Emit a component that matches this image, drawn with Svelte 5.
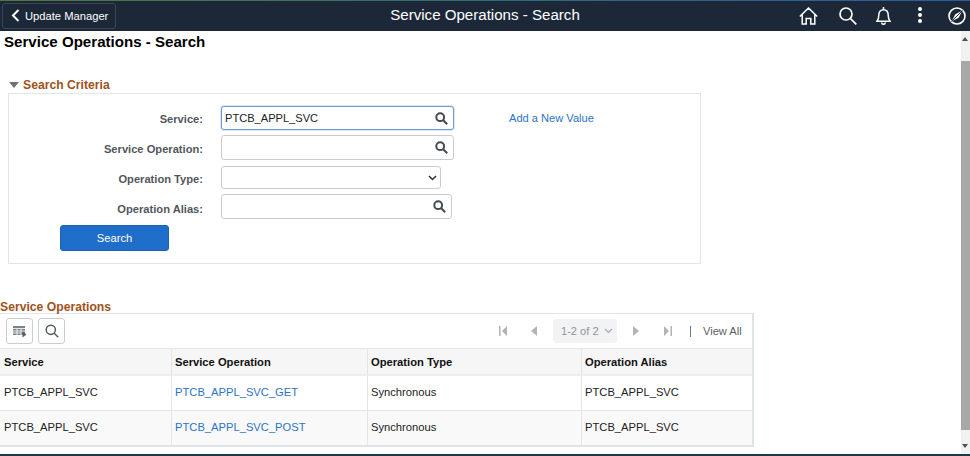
<script>
  const fields = [
    { label: 'Service:', value: 'PTCB_APPL_SVC', cls: 'f1 active', kind: 'lookup' },
    { label: 'Service Operation:', value: '', cls: 'f2', kind: 'lookup' },
    { label: 'Operation Type:', value: '', cls: 'f3', kind: 'select' },
    { label: 'Operation Alias:', value: '', cls: 'f4', kind: 'lookup' }
  ];
  const rows = [
    { op: 'PTCB_APPL_SVC_GET', alt: false },
    { op: 'PTCB_APPL_SVC_POST', alt: true }
  ];
</script>

<div class="page">
  <header class="bar">
    <button class="back">
      <svg width="9" height="13" viewBox="0 0 9 13"><path d="M7.500 1 2 6.500 7.500 12" fill="none" stroke="#fff" stroke-width="2"/></svg>
      <span>Update Manager</span>
    </button>
    <div class="title">Service Operations - Search</div>
    <div class="icons">
      <svg class="home" width="19" height="18" viewBox="0 0 19 18" fill="none" stroke="#fff" stroke-width="1.500"><path d="M.8 9.500 9.500 1l8.700 8.500M3.200 7.500V17H7.200v-5.500h4.600V17h4V7.500"/></svg>
      <svg class="mag" width="18" height="18" viewBox="0 0 18 18" fill="none" stroke="#fff" stroke-width="1.700"><circle cx="7" cy="7" r="6"/><path d="m11.300 11.300 6 6"/></svg>
      <svg class="bell" width="15" height="19" viewBox="0 0 15 19" fill="none" stroke="#fff" stroke-width="1.500"><path d="M1 15.300c1.300-1.400 1.800-3 1.800-6.300 0-3 1.700-5.300 4.700-5.300S12.200 6 12.200 9c0 3.300.5 4.900 1.800 6.300z"/><path d="M7.500 3.500V1M5.700 16.500c0 1.200.8 1.800 1.800 1.800s1.800-.6 1.800-1.800"/></svg>
      <svg class="dots" width="6" height="16" viewBox="0 0 6 16" fill="#fff"><circle cx="3" cy="2" r="2"/><circle cx="3" cy="8" r="2"/><circle cx="3" cy="14" r="2"/></svg>
      <svg class="nav" width="18" height="18" viewBox="0 0 18 18" fill="none" stroke="#fff" stroke-width="1.600"><circle cx="9" cy="9" r="8"/><path d="M14.200 3.800 10.700 10.700 3.800 14.200 7.300 7.300z" fill="#fff" stroke="none"/><path d="M14.500 3.500 3.500 14.500" stroke="#1c2838" stroke-width="1"/></svg>
    </div>
  </header>

  <div class="body">
    <main>
      <h1>Service Operations - Search</h1>
      <h2 class="crit"><i class="tri"></i>Search Criteria</h2>
      <section class="box">
        <div class="form">
          {#each fields as f}
            <div class="row {f.cls}">
              <label>{f.label}</label>
              <div class="field">
                <span>{f.value}</span>
                {#if f.kind === 'lookup'}
                  <svg width="13" height="13" viewBox="0 0 13 13" fill="none" stroke="#444c52" stroke-width="2"><circle cx="5.200" cy="5.200" r="3.900"/><path d="m8.200 8.200 4 4"/></svg>
                {:else}
                  <svg width="9" height="6" viewBox="0 0 9 6" fill="none" stroke="#333" stroke-width="1.500"><path d="m1 1 3.500 3.500L8 1"/></svg>
                {/if}
              </div>
            </div>
          {/each}
          <button class="search">Search</button>
        </div>
        <a class="add" href="#a">Add a New Value</a>
      </section>

      <h2 class="ops">Service Operations</h2>
      <section class="grid">
        <div class="tools">
          <button class="tool">
            <svg width="14" height="13" viewBox="0 0 14 13" fill="none"><path d="M0 1h12v9H0z" fill="#7b848b"/><path d="M0 3.500h12M4 3.500V10M8 3.500V10M0 6h12M0 8h8" stroke="#fff" stroke-width=".8"/><path d="M9.500 6.500 13.500 9.500 9.500 12.500z" fill="#555d63"/></svg>
          </button>
          <button class="tool">
            <svg width="14" height="14" viewBox="0 0 14 14" fill="none" stroke="#555d63" stroke-width="1.500"><circle cx="5.800" cy="5.800" r="4.600"/><path d="m9.200 9.200 4 4"/></svg>
          </button>
          <div class="pager">
            <svg width="8" height="10" viewBox="0 0 8 10"><path d="M0 0h1.500v10H0zM8 0v10L3 5z" fill="#aeb4b9"/></svg>
            <svg class="p2" width="6" height="10" viewBox="0 0 6 10"><path d="M6 0v10L0 5z" fill="#aeb4b9"/></svg>
            <div class="count"><span>1-2 of 2</span>
              <svg width="9" height="6" viewBox="0 0 9 6" fill="none" stroke="#a3a9ae" stroke-width="1.100"><path d="m1 1 3.500 3.500L8 1"/></svg>
            </div>
            <svg class="p3" width="6" height="10" viewBox="0 0 6 10"><path d="M0 0v10l6-5z" fill="#aeb4b9"/></svg>
            <svg class="p4" width="8" height="10" viewBox="0 0 8 10"><path d="M0 0v10l5-5zM6.500 0H8v10H6.500z" fill="#aeb4b9"/></svg>
            <i class="sep"></i>
            <span class="all">View All</span>
          </div>
        </div>
        <table>
          <thead>
            <tr><th class="c1">Service</th><th class="c2">Service Operation</th><th class="c3">Operation Type</th><th class="c4">Operation Alias</th></tr>
          </thead>
          <tbody>
            {#each rows as r}
              <tr class:alt={r.alt}>
                <td>PTCB_APPL_SVC</td>
                <td><a href="#a">{r.op}</a></td>
                <td>Synchronous</td>
                <td>PTCB_APPL_SVC</td>
              </tr>
            {/each}
          </tbody>
        </table>
      </section>
    </main>
    <aside class="scroll">
      <i class="up"></i>
      <div class="thumb"></div>
      <i class="down"></i>
    </aside>
  </div>
  <div class="foot"></div>
</div>

<style>
  :global(body) { margin: 0; background: #fff; }
  .page { width: 970px; height: 456px; display: flex; flex-direction: column; overflow: hidden; font-family: "Liberation Sans", Arial, sans-serif; color: #222; white-space: nowrap; }
  .bar { height: 31px; box-sizing: border-box; flex: none; background: #1c2838; display: flex; align-items: center; position: relative; color: #fff; }
  .bar::before { content: ""; position: absolute; left: 0; right: 0; top: 0; height: 1px; background: linear-gradient(90deg, #4f7a3c, #2f6a78 50%, #2a5f9e); }
  .back { margin: 0 0 0 2px; width: 114px; height: 26px; box-sizing: border-box; background: #1c2838; border: 1px solid #3a4655; border-radius: 3px; color: #fff; font: 11.200px "Liberation Sans", Arial, sans-serif; white-space: nowrap; display: flex; align-items: center; padding: 0 0 0 8px; gap: 5px; }
  .title { position: absolute; left: 0; width: 970px; text-align: center; font-size: 15.100px; top: 6px; }
  .icons { position: absolute; inset: 0; }
  .icons svg { position: absolute; }
  .home { left: 799px; top: 7px; }
  .mag { left: 839px; top: 7px; }
  .bell { left: 876px; top: 6px; }
  .dots { left: 917px; top: 7px; }
  .nav { left: 948px; top: 7px; }

  .body { flex: 1; display: flex; min-height: 0; }
  main { flex: 1; min-width: 0; }
  h1 { margin: 0; padding: 2px 0 0 4px; font-size: 15.100px; line-height: 18px; font-weight: bold; color: #000; }
  h2 { margin: 0; font-size: 12.200px; line-height: 14px; font-weight: bold; color: #a0521c; }
  .crit { margin-top: 27px; padding-left: 9px; display: flex; align-items: center; gap: 4px; }
  .tri { width: 0; height: 0; border-left: 5px solid transparent; border-right: 5px solid transparent; border-top: 6px solid #6d7378; }
  .box { margin: 1px 0 0 8px; width: 693px; height: 171px; box-sizing: border-box; border: 1px solid #e3e5e7; position: relative; }
  .form { display: flex; flex-direction: column; padding-top: 12px; }
  .row { display: flex; align-items: center; }
  .row label { width: 194px; padding-top: 2px; text-align: right; font-size: 11.150px; font-weight: bold; color: #51575c; }
  .f4 label { padding-top: 5px; }
  .field { margin-left: 18px; box-sizing: border-box; height: 25px; border: 1px solid #c9cdd1; border-radius: 3px; display: flex; align-items: center; justify-content: space-between; padding: 0 5px 0 3px; font-size: 11.100px; color: #222; background: #fff; }
  .f1 .field { width: 233px; height: 24px; border-color: #6f9ccf; box-shadow: 0 0 0 1px #dbe7f4; }
  .f2 { margin-top: 5px; }
  .f2 .field { width: 233px; }
  .f3 { margin-top: 6px; }
  .f3 .field { width: 220px; height: 23px; padding-right: 3px; }
  .f4 { margin-top: 5px; }
  .f4 .field { width: 231px; }
  .search { margin: 6px 0 0 51px; width: 109px; height: 26px; background: #1f6fca; border: 1px solid #1a63b6; border-radius: 3px; color: #fff; font: 11.200px "Liberation Sans", Arial, sans-serif; padding: 0; }
  .add { position: absolute; left: 500px; top: 18px; font-size: 11.100px; color: #2c73c9; text-decoration: none; }

  .ops { margin-top: 36px; margin-bottom: -1px; }
  .grid { width: 754px; box-sizing: border-box; border: 1px solid #e3e5e7; border-left: none; border-bottom: 2px solid #dfe3e6; border-right: 2px solid #dfe3e6; height: 134px; }
  .tools { height: 34px; box-sizing: border-box; display: flex; align-items: center; padding-left: 6px; gap: 5px; position: relative; }
  .tool { width: 27px; height: 26px; box-sizing: border-box; background: #fff; border: 1px solid #c9cdd1; border-radius: 3px; padding: 0; display: flex; align-items: center; justify-content: center; }
  .pager { position: absolute; left: 499px; top: 0; height: 34px; display: flex; align-items: center; font-size: 11.100px; color: #5b6166; }
  .p2 { margin-left: 24px; }
  .count { margin-left: 16px; width: 64px; height: 24px; box-sizing: border-box; background: #f1f3f4; border-radius: 3px; color: #8d9499; display: flex; align-items: center; justify-content: space-between; padding: 0 4px 0 8px; }
  .p3 { margin-left: 16px; }
  .p4 { margin-left: 25px; }
  .sep { margin-left: 18px; width: 1px; height: 11px; background: #6d7d8c; }
  .all { margin-left: 12px; }
  table { width: 752px; border-collapse: separate; border-spacing: 0; table-layout: fixed; font-size: 11.200px; }
  th { height: 28px; box-sizing: border-box; padding: 0 0 0 3px; text-align: left; font-weight: bold; color: #111; background: #f6f6f6; border-top: 1px solid #e3e5e7; border-bottom: 2px solid #eceeef; border-left: 1px solid #e3e5e7; }
  th:first-child, td:first-child { border-left: none; padding-left: 4px; }
  .c1 { width: 171px; } .c2 { width: 196px; } .c3 { width: 214px; }
  td { height: 35px; box-sizing: border-box; padding: 0 0 2px 3px; color: #222; border-left: 1px solid #e3e5e7; border-bottom: 1px solid #e3e5e7; }
  tr:last-child td { border-bottom: none; height: 34px; }
  tr.alt td { background: #f9f9f9; }
  td a { color: #2c73c9; text-decoration: none; }

  .scroll { width: 9px; flex: none; background: #f1f1f1; position: relative; }
  .thumb { position: absolute; left: 0; right: 0; top: 30px; height: 369px; background: #a8a8a8; }
  .up, .down { position: absolute; left: 1px; width: 0; height: 0; border-left: 3.500px solid transparent; border-right: 3.500px solid transparent; }
  .up { top: 6px; border-bottom: 4px solid #505050; }
  .down { bottom: 6px; border-top: 4px solid #505050; }
  .foot { height: 2px; flex: none; background: #1c3a44; }
</style>
